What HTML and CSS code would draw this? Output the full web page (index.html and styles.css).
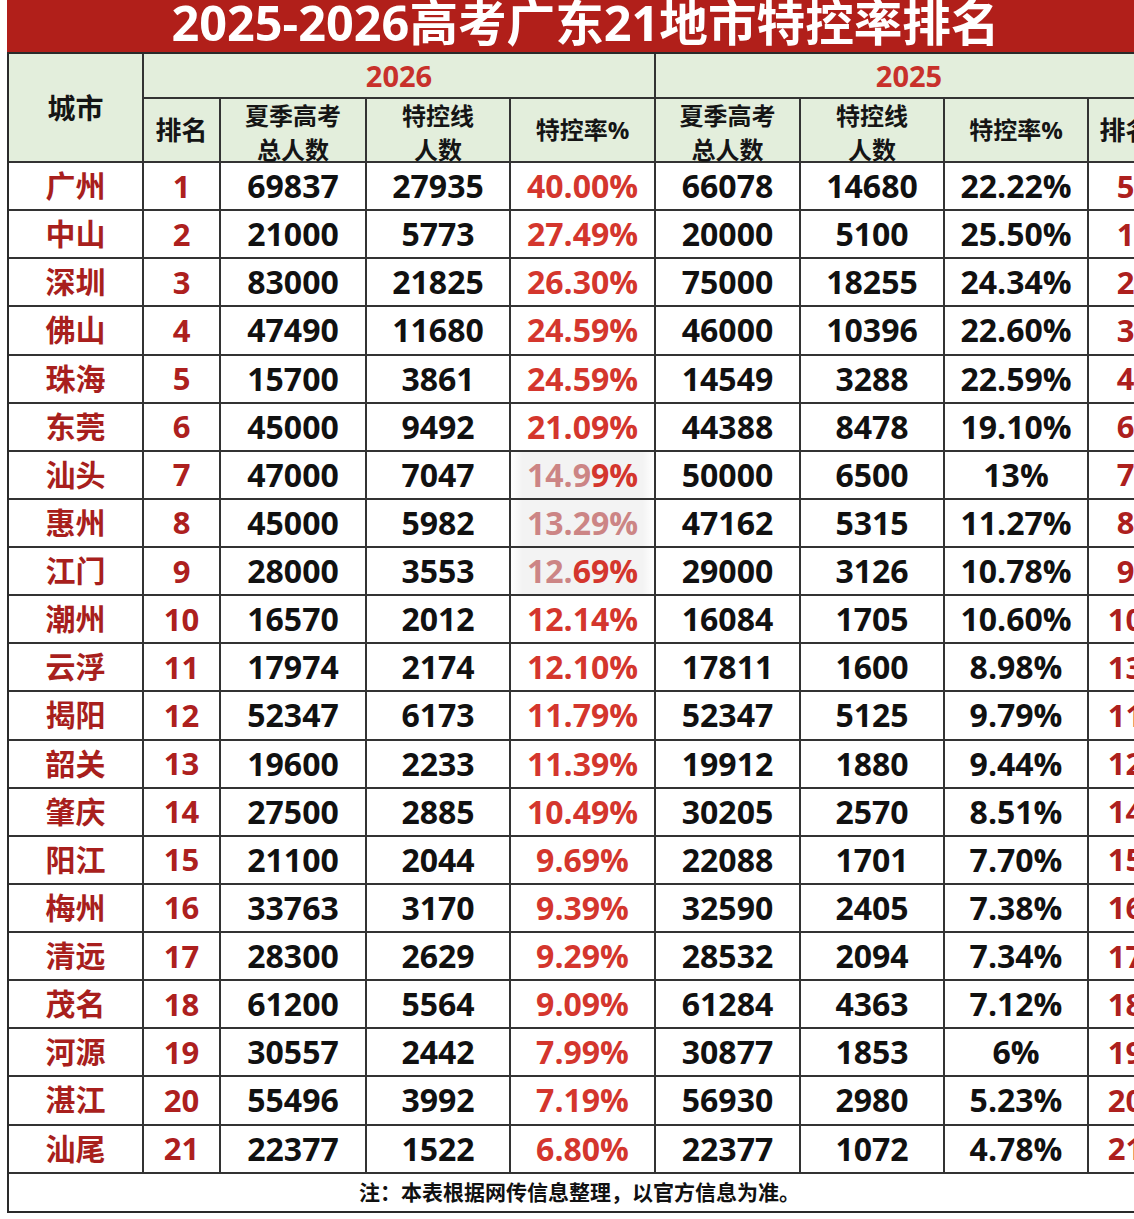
FILE: index.html
```html
<!DOCTYPE html>
<html lang="zh-CN">
<head>
<meta charset="utf-8">
<title>2025-2026高考广东21地市特控率排名</title>
<link rel="stylesheet" href="styles.css">
</head>
<body>
<div class="page">
  <div class="title">2025-2026高考广东21地市特控率排名</div>
  <div class="grid">
    <div class="c head city-h">城市</div>
    <div class="c head year y26">2026</div>
    <div class="c head year y25">2025</div>
    <div class="c head sub rank-h">排名</div>
    <div class="c head sub two">夏季高考<br>总人数</div>
    <div class="c head sub two">特控线<br>人数</div>
    <div class="c head sub">特控率%</div>
    <div class="c head sub two">夏季高考<br>总人数</div>
    <div class="c head sub two">特控线<br>人数</div>
    <div class="c head sub">特控率%</div>
    <div class="c head sub rank-h">排名</div>

    <div class="c city">广州</div><div class="c rk">1</div><div class="c n">69837</div><div class="c n">27935</div><div class="c rate">40.00%</div><div class="c n">66078</div><div class="c n">14680</div><div class="c n">22.22%</div><div class="c rk">5</div>
    <div class="c city">中山</div><div class="c rk">2</div><div class="c n">21000</div><div class="c n">5773</div><div class="c rate">27.49%</div><div class="c n">20000</div><div class="c n">5100</div><div class="c n">25.50%</div><div class="c rk">1</div>
    <div class="c city">深圳</div><div class="c rk">3</div><div class="c n">83000</div><div class="c n">21825</div><div class="c rate">26.30%</div><div class="c n">75000</div><div class="c n">18255</div><div class="c n">24.34%</div><div class="c rk">2</div>
    <div class="c city">佛山</div><div class="c rk">4</div><div class="c n">47490</div><div class="c n">11680</div><div class="c rate">24.59%</div><div class="c n">46000</div><div class="c n">10396</div><div class="c n">22.60%</div><div class="c rk">3</div>
    <div class="c city">珠海</div><div class="c rk">5</div><div class="c n">15700</div><div class="c n">3861</div><div class="c rate">24.59%</div><div class="c n">14549</div><div class="c n">3288</div><div class="c n">22.59%</div><div class="c rk">4</div>
    <div class="c city">东莞</div><div class="c rk">6</div><div class="c n">45000</div><div class="c n">9492</div><div class="c rate">21.09%</div><div class="c n">44388</div><div class="c n">8478</div><div class="c n">19.10%</div><div class="c rk">6</div>
    <div class="c city">汕头</div><div class="c rk">7</div><div class="c n">47000</div><div class="c n">7047</div><div class="c rate ghost"><span class="fade">14.9</span>9%</div><div class="c n">50000</div><div class="c n">6500</div><div class="c n">13%</div><div class="c rk">7</div>
    <div class="c city">惠州</div><div class="c rk">8</div><div class="c n">45000</div><div class="c n">5982</div><div class="c rate ghost"><span class="fade">13.29%</span></div><div class="c n">47162</div><div class="c n">5315</div><div class="c n">11.27%</div><div class="c rk">8</div>
    <div class="c city">江门</div><div class="c rk">9</div><div class="c n">28000</div><div class="c n">3553</div><div class="c rate ghost"><span class="fade">12.</span>69%</div><div class="c n">29000</div><div class="c n">3126</div><div class="c n">10.78%</div><div class="c rk">9</div>
    <div class="c city">潮州</div><div class="c rk">10</div><div class="c n">16570</div><div class="c n">2012</div><div class="c rate">12.14%</div><div class="c n">16084</div><div class="c n">1705</div><div class="c n">10.60%</div><div class="c rk">10</div>
    <div class="c city">云浮</div><div class="c rk">11</div><div class="c n">17974</div><div class="c n">2174</div><div class="c rate">12.10%</div><div class="c n">17811</div><div class="c n">1600</div><div class="c n">8.98%</div><div class="c rk">13</div>
    <div class="c city">揭阳</div><div class="c rk">12</div><div class="c n">52347</div><div class="c n">6173</div><div class="c rate">11.79%</div><div class="c n">52347</div><div class="c n">5125</div><div class="c n">9.79%</div><div class="c rk">11</div>
    <div class="c city">韶关</div><div class="c rk">13</div><div class="c n">19600</div><div class="c n">2233</div><div class="c rate">11.39%</div><div class="c n">19912</div><div class="c n">1880</div><div class="c n">9.44%</div><div class="c rk">12</div>
    <div class="c city">肇庆</div><div class="c rk">14</div><div class="c n">27500</div><div class="c n">2885</div><div class="c rate">10.49%</div><div class="c n">30205</div><div class="c n">2570</div><div class="c n">8.51%</div><div class="c rk">14</div>
    <div class="c city">阳江</div><div class="c rk">15</div><div class="c n">21100</div><div class="c n">2044</div><div class="c rate">9.69%</div><div class="c n">22088</div><div class="c n">1701</div><div class="c n">7.70%</div><div class="c rk">15</div>
    <div class="c city">梅州</div><div class="c rk">16</div><div class="c n">33763</div><div class="c n">3170</div><div class="c rate">9.39%</div><div class="c n">32590</div><div class="c n">2405</div><div class="c n">7.38%</div><div class="c rk">16</div>
    <div class="c city">清远</div><div class="c rk">17</div><div class="c n">28300</div><div class="c n">2629</div><div class="c rate">9.29%</div><div class="c n">28532</div><div class="c n">2094</div><div class="c n">7.34%</div><div class="c rk">17</div>
    <div class="c city">茂名</div><div class="c rk">18</div><div class="c n">61200</div><div class="c n">5564</div><div class="c rate">9.09%</div><div class="c n">61284</div><div class="c n">4363</div><div class="c n">7.12%</div><div class="c rk">18</div>
    <div class="c city">河源</div><div class="c rk">19</div><div class="c n">30557</div><div class="c n">2442</div><div class="c rate">7.99%</div><div class="c n">30877</div><div class="c n">1853</div><div class="c n">6%</div><div class="c rk">19</div>
    <div class="c city">湛江</div><div class="c rk">20</div><div class="c n">55496</div><div class="c n">3992</div><div class="c rate">7.19%</div><div class="c n">56930</div><div class="c n">2980</div><div class="c n">5.23%</div><div class="c rk">20</div>
    <div class="c city">汕尾</div><div class="c rk">21</div><div class="c n">22377</div><div class="c n">1522</div><div class="c rate">6.80%</div><div class="c n">22377</div><div class="c n">1072</div><div class="c n">4.78%</div><div class="c rk">21</div>

    <div class="c foot">注：本表根据网传信息整理，以官方信息为准。</div>
  </div>
</div>
</body>
</html>
```

FILE: styles.css
```css
html, body {
  margin: 0;
  padding: 0;
  background: #ffffff;
  overflow: hidden;
}

.page {
  width: 1157px;
  padding-left: 7px;
  font-family: "Open Sans", "Noto Sans CJK SC", sans-serif;
  font-weight: 700;
  color: #111;
}

.title {
  height: 52px;
  background: #b11f1a;
  color: #ffffff;
  font-size: 48.6px;
  line-height: 44px;
  text-align: center;
  white-space: nowrap;
}

.grid {
  display: grid;
  grid-template-columns: 133px 75px 144px 142px 143px 143px 142px 142px 73px;
  grid-template-rows: 43px 62px repeat(21, 46.14px) 37px;
  gap: 2px;
  background: #333333;
  border: 2px solid #2a2a2a;
}

.c {
  background: #ffffff;
  display: flex;
  align-items: center;
  justify-content: center;
  white-space: nowrap;
  line-height: 1;
}

.head {
  background: #e3eedc;
  color: #151515;
}

.city-h {
  grid-row: span 2;
  font-size: 28px;
}

.year {
  grid-column: span 4;
  color: #c8312b;
  font-size: 29px;
}

.sub {
  font-size: 24px;
}

.rank-h {
  font-size: 26px;
}

.sub.two {
  align-items: flex-start;
  line-height: 34px;
  text-align: center;
}

.city {
  color: #a81f1d;
  font-size: 30px;
}

.rk {
  color: #ad201e;
  font-size: 31px;
}

.n {
  color: #111111;
  font-size: 32px;
}

.rate {
  color: #d4362d;
  font-size: 32px;
}

.ghost {
  background: linear-gradient(90deg, #ffffff 0%, #f3f3f3 8%, #f3f3f3 92%, #ffffff 100%);
}

.fade {
  color: #cc8585;
}

.foot {
  grid-column: 1 / -1;
  font-size: 21px;
  color: #111111;
  padding-right: 12px;
}
```
